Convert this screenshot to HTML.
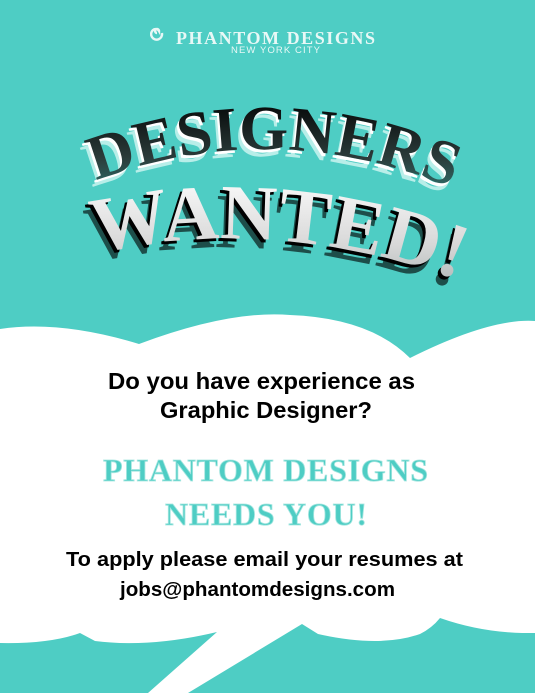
<!DOCTYPE html>
<html><head><meta charset="utf-8"><style>
html,body{margin:0;padding:0;width:535px;height:693px;overflow:hidden;background:#4ecdc4}
svg{display:block}
</style></head><body>
<svg width="535" height="693" viewBox="0 0 535 693" xmlns="http://www.w3.org/2000/svg">
<defs>
<linearGradient id="dk" x1="0" y1="0" x2="0" y2="1"><stop offset="0" stop-color="#000"/><stop offset="0.6" stop-color="#2b3b3a"/><stop offset="1" stop-color="#2f7d77"/></linearGradient>
<linearGradient id="lt" x1="0" y1="0" x2="0" y2="1"><stop offset="0" stop-color="#ffffff"/><stop offset="0.6" stop-color="#d8d8d8"/><stop offset="1" stop-color="#a8b0b0"/></linearGradient>
<path id="a1" d="M 85 185 Q 270 110 462 192"/>
<path id="a2" d="M 88 255 Q 270 212 465 282"/>
</defs>
<rect width="535" height="693" fill="#4ecdc4"/>
<path d="M0 329 Q 60 320 139 344 Q 230 310 290 315 Q 370 318 410 358 Q 490 318 535 321 L535 693 L0 693 Z" fill="#fff"/>
<path d="M0 643 Q 50 644 80 633 L 95 641 Q 150 648 217 632 L 148 693 L 0 693 Z" fill="#4ecdc4"/>
<path d="M188 693 L 302 624 L 318 634 Q 380 648 420 634 Q 432 628 440 618 Q 480 632 522 633 L535 633 L535 693 Z" fill="#4ecdc4"/>

<g fill="none" stroke="#e8f8f6" stroke-width="2.4">
<path d="M157 33 a2 2 0 1 1 2 -2 a4 4 0 0 0 -6 -1 a5.5 5.5 0 1 0 9 3"/>
</g>
<text x="176" y="44" font-family="'Liberation Serif',serif" font-weight="bold" font-size="18" fill="#e8f8f6" textLength="199" lengthAdjust="spacing">PHANTOM DESIGNS</text>
<text x="231" y="53" font-family="'Liberation Sans',sans-serif" font-size="9.5" fill="#e8f8f6" textLength="89" lengthAdjust="spacing">NEW YORK CITY</text>

<g font-family="'Liberation Serif',serif" font-weight="bold" font-size="63">
<text fill="#b8eee9" transform="translate(-4,7)"><textPath href="#a1" startOffset="50%" text-anchor="middle">DESIGNERS</textPath></text>
<text fill="#fff" transform="translate(-2,3)"><textPath href="#a1" startOffset="50%" text-anchor="middle">DESIGNERS</textPath></text>
<text fill="url(#dk)"><textPath href="#a1" startOffset="50%" text-anchor="middle">DESIGNERS</textPath></text>
</g>
<g font-family="'Liberation Serif',serif" font-weight="bold" font-size="78">
<text fill="#1d4e4a" transform="translate(-5,9)"><textPath href="#a2" startOffset="50%" text-anchor="middle">WANTED!</textPath></text>
<text fill="#000" transform="translate(-3,3)"><textPath href="#a2" startOffset="50%" text-anchor="middle">WANTED!</textPath></text>
<text fill="url(#lt)"><textPath href="#a2" startOffset="50%" text-anchor="middle">WANTED!</textPath></text>
</g>

<g font-family="'Liberation Sans',sans-serif" font-weight="bold" fill="#000">
<text x="108" y="389" font-size="23" textLength="307" lengthAdjust="spacingAndGlyphs">Do you have experience as</text>
<text x="160" y="418" font-size="23" textLength="212" lengthAdjust="spacingAndGlyphs">Graphic Designer?</text>
<text x="66" y="566" font-size="20" textLength="397" lengthAdjust="spacingAndGlyphs">To apply please email your resumes at</text>
<text x="120" y="596" font-size="20" textLength="275" lengthAdjust="spacingAndGlyphs">jobs@phantomdesigns.com</text>
</g>
<g font-family="'Liberation Serif',serif" font-weight="bold" font-size="32" fill="#4ecdc4" stroke="#a5e6e0" stroke-width="0.8">
<text x="103" y="481" textLength="325" lengthAdjust="spacing">PHANTOM DESIGNS</text>
<text x="165" y="525" textLength="202" lengthAdjust="spacing">NEEDS YOU!</text>
</g>
</svg>
</body></html>
